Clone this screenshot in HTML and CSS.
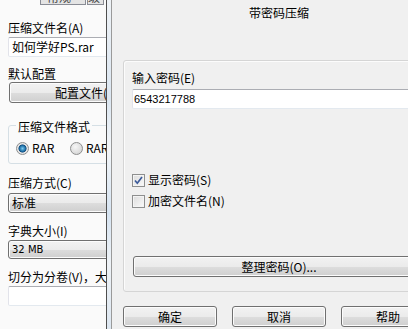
FILE: index.html
```html
<!DOCTYPE html>
<html lang="zh-CN">
<head>
  <meta charset="UTF-8">
  <title>带密码压缩</title>
  <link rel="stylesheet" href="styles.css">
</head>
<body>
  <div class="screen">
    <div class="back-window">
      <div class="back-content">
        <div class="tabs">
          <span class="tab tab-a">常规</span>
          <span class="tab tab-b">高级</span>
        </div>
        <div class="label first">压缩文件名(A)</div>
        <div class="textbox">如何学好PS.rar</div>
        <div class="label gap-9">默认配置</div>
        <div class="btn profile">配置文件(</div>
        <div class="group">
          <div class="legend">压缩文件格式</div>
          <div class="radios">
            <span class="radio-item"><span class="radio on"></span>RAR</span>
            <span class="radio-item"><span class="radio"></span>RAR5</span>
          </div>
        </div>
        <div class="label gap-11">压缩方式(C)</div>
        <div class="combo">标准</div>
        <div class="label gap-10">字典大小(I)</div>
        <div class="combo small">32 MB</div>
        <div class="label gap-10">切分为分卷(V)，大小</div>
        <div class="textbox"></div>
      </div>
    </div>

    <div class="frame"></div>

    <div class="dialog">
      <div class="title">带密码压缩</div>
      <div class="panel">
        <div class="label">输入密码(E)</div>
        <div class="textbox pass">6543217788</div>
        <div class="checks">
          <div class="check">
            <span class="box">
              <svg width="11" height="11" viewBox="0 0 11 11">
                <path d="M2 5.5 L4.3 8.2 L9 2" fill="none" stroke="#3b5a9a" stroke-width="1.7"/>
              </svg>
            </span>
            显示密码(S)
          </div>
          <div class="check">
            <span class="box"></span>
            加密文件名(N)
          </div>
        </div>
        <div class="btn organize">整理密码(O)...</div>
      </div>
      <div class="actions">
        <div class="btn action">确定</div>
        <div class="btn action">取消</div>
        <div class="btn action">帮助</div>
      </div>
    </div>
  </div>
</body>
</html>
```

FILE: styles.css
```css
* {
  box-sizing: border-box;
}
html, body {
  margin: 0;
}
body {
  width: 408px;
  height: 329px;
  overflow: hidden;
  font-family: "Noto Sans CJK SC", sans-serif;
  font-size: 12px;
  color: #000;
  background: #f0f0f0;
}
.screen {
  display: flex;
  height: 329px;
}

/* window behind */
.back-window {
  flex: none;
  width: 106px;
  overflow: hidden;
  background: #fafafa;
}
.back-content {
  width: 220px;
  padding-left: 8px;
}
.tabs {
  display: flex;
  height: 5px;
  padding-left: 32px;
  gap: 1px;
}
.tab {
  height: 5px;
  overflow: hidden;
  border: 1px solid #898c95;
  border-top: none;
  background: #e4e4e4;
  color: #444;
  font-size: 12px;
  line-height: 14px;
  text-indent: 6px;
  display: flex;
  align-items: flex-end;
}
.tab-a {
  width: 46px;
}
.tab-b {
  width: 17px;
}
.label {
  line-height: 16px;
  white-space: nowrap;
}
.first {
  margin-top: 15px;
}
.gap-9 {
  margin-top: 9px;
}
.gap-10 {
  margin-top: 10px;
}
.gap-11 {
  margin-top: 11px;
}
.textbox {
  height: 20px;
  margin-top: 1px;
  padding-left: 3px;
  line-height: 18px;
  background: #fff;
  border: 1px solid;
  border-color: #abadb3 #dbdfe6 #e3e9ef #e2e3ea;
  border-radius: 2px;
}
.btn {
  border: 1px solid #707070;
  border-radius: 3px;
  background: linear-gradient(#f2f2f2 0%, #ebebeb 50%, #dddddd 51%, #cfcfcf 100%);
  box-shadow: inset 0 0 0 1px #fcfcfc;
  text-align: center;
  white-space: nowrap;
}
.profile {
  height: 21px;
  margin-left: 1px;
  line-height: 19px;
  text-align: left;
  padding-left: 45px;
}
.group {
  height: 39px;
  margin-top: 22px;
  padding-left: 7px;
  border: 1px solid #d5dfe5;
  border-radius: 3px;
}
.legend {
  width: fit-content;
  margin-top: -7px;
  padding: 0 2px;
  line-height: 16px;
  background: #fafafa;
}
.radios {
  display: flex;
  margin-top: 5px;
  line-height: 16px;
}
.radio-item {
  display: flex;
  align-items: center;
  width: 54px;
}
.radio {
  width: 13px;
  height: 13px;
  margin-right: 3px;
  border-radius: 50%;
  border: 1px solid #8e8f8f;
  background: radial-gradient(circle at 40% 35%, #f6f6f6 0%, #dadada 70%, #c6c6c6 100%);
}
.radio.on {
  background: radial-gradient(circle at 50% 50%, #7ccbf1 0%, #1a6ca3 38%, #174a79 48%, #e8e8e8 56%, #d6d6d6 100%);
}
.combo {
  height: 20px;
  margin-top: 2px;
  padding-left: 3px;
  line-height: 18px;
  border: 1px solid #707070;
  border-radius: 3px;
  background: linear-gradient(#f2f2f2 0%, #ebebeb 50%, #dddddd 51%, #cfcfcf 100%);
  box-shadow: inset 0 0 0 1px #fcfcfc;
}
.combo.small {
  height: 19px;
  margin-top: 1px;
  font-family: "DejaVu Sans", sans-serif;
  font-size: 10px;
  line-height: 17px;
}

/* dialog frame edge */
.frame {
  flex: none;
  width: 6px;
  border-left: 1px solid #4e4e4e;
  border-right: 1px solid #9a9a9a;
  background: linear-gradient(#eef2f6 0%, #dbe6f1 30%, #f3f6f9 45%, #d6e4f2 65%, #eef2f6 80%, #dde7f1 100%);
}

/* dialog */
.dialog {
  flex: none;
  width: 334px;
  padding: 0 11px;
  background: #f0f0f0;
}
.title {
  padding-top: 5px;
  line-height: 16px;
  text-align: center;
}
.panel {
  margin-top: 39px;
  padding: 9px 9px 14px 8px;
  border: 1px solid #d5d5d5;
  border-radius: 3px;
  box-shadow: inset 1px 1px 0 #fcfcfc;
}
.pass {
  margin-top: 3px;
  padding-left: 1px;
  font-family: "Liberation Sans", sans-serif;
  font-size: 11px;
}
.checks {
  display: flex;
  flex-direction: column;
  gap: 5px;
  margin-top: 63px;
}
.check {
  display: flex;
  align-items: center;
  line-height: 16px;
}
.box {
  display: flex;
  align-items: center;
  justify-content: center;
  width: 13px;
  height: 13px;
  margin-right: 3px;
  border: 1px solid #8e8f8f;
  background: linear-gradient(135deg, #dcdcdc 0%, #f4f4f4 80%, #fff 100%);
  box-shadow: inset 0 0 0 1px #f4f4f4;
}
.organize {
  height: 21px;
  margin-top: 47px;
  margin-left: 1px;
  line-height: 19px;
}
.actions {
  display: flex;
  gap: 15px;
  margin-top: 14px;
}
.action {
  width: 94px;
  height: 21px;
  line-height: 19px;
}
```
